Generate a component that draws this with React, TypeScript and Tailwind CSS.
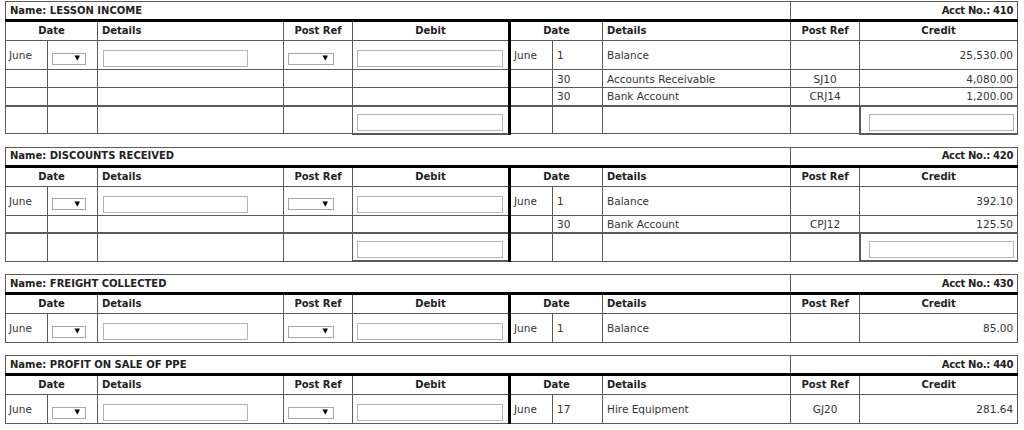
import React from "react"

type Entry = { day: string; details: string; ref: string; amount: string }
type Account = { name: string; no: number; credits: Entry[]; total: boolean }

const accounts: Account[] = [
  {
    name: "LESSON INCOME",
    no: 410,
    credits: [
      { day: "1", details: "Balance", ref: "", amount: "25,530.00" },
      { day: "30", details: "Accounts Receivable", ref: "SJ10", amount: "4,080.00" },
      { day: "30", details: "Bank Account", ref: "CRJ14", amount: "1,200.00" },
    ],
    total: true,
  },
  {
    name: "DISCOUNTS RECEIVED",
    no: 420,
    credits: [
      { day: "1", details: "Balance", ref: "", amount: "392.10" },
      { day: "30", details: "Bank Account", ref: "CPJ12", amount: "125.50" },
    ],
    total: true,
  },
  {
    name: "FREIGHT COLLECTED",
    no: 430,
    credits: [{ day: "1", details: "Balance", ref: "", amount: "85.00" }],
    total: false,
  },
  {
    name: "PROFIT ON SALE OF PPE",
    no: 440,
    credits: [{ day: "17", details: "Hire Equipment", ref: "GJ20", amount: "281.64" }],
    total: false,
  },
]

// base cell, alignment added per cell so it doesn't fight
const cell = "border border-[#5a5a5a] px-[3px]"
const mid = "align-middle"
const low = "align-bottom pb-[2px]"
const split = "border-l-[3px] border-l-black"

function FakeSelect({ w }: { w: string }) {
  return (
    <div className="flex h-[17px] items-center">
      <div className={`flex h-[12px] ${w} items-center justify-end border border-[#a8a8a8] bg-white pr-[5px]`}>
        <span className="text-[7px] leading-none text-black">▼</span>
      </div>
    </div>
  )
}

function TextBox({ className = "w-[146px]" }: { className?: string }) {
  return <div className={`h-[17px] border border-[#b4b4b4] bg-white ${className}`} />
}

function Ledger({ acct }: { acct: Account }) {
  const rows = acct.credits.map((c, i) => {
    const first = i === 0
    const inp = first ? `${low} pl-[4px]` : mid
    return (
      <tr key={i} className={first ? "h-[29px]" : "h-[18px]"}>
        <td className={`${cell} ${mid}`}>{first ? "June" : ""}</td>
        <td className={`${cell} ${inp}`}>{first && <FakeSelect w="w-[34px]" />}</td>
        <td className={`${cell} ${inp} ${first ? "pl-[5px]" : ""}`}>{first && <TextBox className="w-[145px]" />}</td>
        <td className={`${cell} ${inp}`}>{first && <FakeSelect w="w-[46px]" />}</td>
        <td className={`${cell} ${inp}`}>{first && <TextBox />}</td>
        <td className={`${cell} ${mid} ${split}`}>{first ? "June" : ""}</td>
        <td className={`${cell} ${mid} pl-[4px]`}>{c.day}</td>
        <td className={`${cell} ${mid} pl-[4px]`}>{c.details}</td>
        <td className={`${cell} ${mid} text-center`}>{c.ref}</td>
        <td className={`${cell} ${mid} pr-[4px] text-right`}>{c.amount}</td>
      </tr>
    )
  })

  return (
    <table className="mb-[12px] w-[1012px] table-fixed border-collapse border border-[#5a5a5a] bg-white">
      <colgroup>
        <col className="w-[42px]" />
        <col className="w-[50px]" />
        <col className="w-[186px]" />
        <col className="w-[69px]" />
        <col className="w-[157px]" />
        <col className="w-[43px]" />
        <col className="w-[50px]" />
        <col className="w-[188px]" />
        <col className="w-[69px]" />
        <col className="w-[158px]" />
      </colgroup>
      <tbody>
        <tr className="h-[19px] text-[10px] font-bold text-[#222]">
          <td colSpan={8} className={`${cell} ${mid} border-b-[3px] border-b-black pl-[4px]`}>
            Name: {acct.name}
          </td>
          <td colSpan={2} className={`${cell} ${mid} border-b-[3px] border-b-black pr-[4px] text-right tracking-[-0.3px]`}>
            Acct No.: {acct.no}
          </td>
        </tr>
        <tr className="h-[20px] text-[10px] font-bold text-[#222]">
          <td colSpan={2} className={`${cell} ${mid} text-center`}>Date</td>
          <td className={`${cell} ${mid} pl-[4px]`}>Details</td>
          <td className={`${cell} ${mid} text-center`}>Post Ref</td>
          <td className={`${cell} ${mid} text-center`}>Debit</td>
          <td colSpan={2} className={`${cell} ${mid} ${split} text-center`}>Date</td>
          <td className={`${cell} ${mid} pl-[4px]`}>Details</td>
          <td className={`${cell} ${mid} text-center`}>Post Ref</td>
          <td className={`${cell} ${mid} text-center`}>Credit</td>
        </tr>
        {rows}
        {acct.total && (
          <tr className="h-[28px]">
            <td className={`${cell} border-t-2`} />
            <td className={`${cell} border-t-2`} />
            <td className={`${cell} border-t-2`} />
            <td className={`${cell} border-t-2`} />
            <td className={`${cell} ${low} border-t-2 border-b-2 pl-[4px]`}>
              <TextBox />
            </td>
            <td className={`${cell} ${split} border-t-2`} />
            <td className={`${cell} border-t-2`} />
            <td className={`${cell} border-t-2`} />
            <td className={`${cell} border-t-2`} />
            <td className={`${cell} ${low} border-t-2 border-b-2 border-l-2`}>
              <div className="flex justify-end">
                <TextBox className="w-[145px]" />
              </div>
            </td>
          </tr>
        )}
      </tbody>
    </table>
  )
}

export default function App() {
  return (
    <div className="min-h-[430px] bg-white pl-[5px] pt-[1px] font-['DejaVu_Sans',Verdana,sans-serif] text-[10.5px] leading-[12px] text-[#333]">
      {accounts.map((a) => (
        <Ledger key={a.no} acct={a} />
      ))}
    </div>
  )
}
